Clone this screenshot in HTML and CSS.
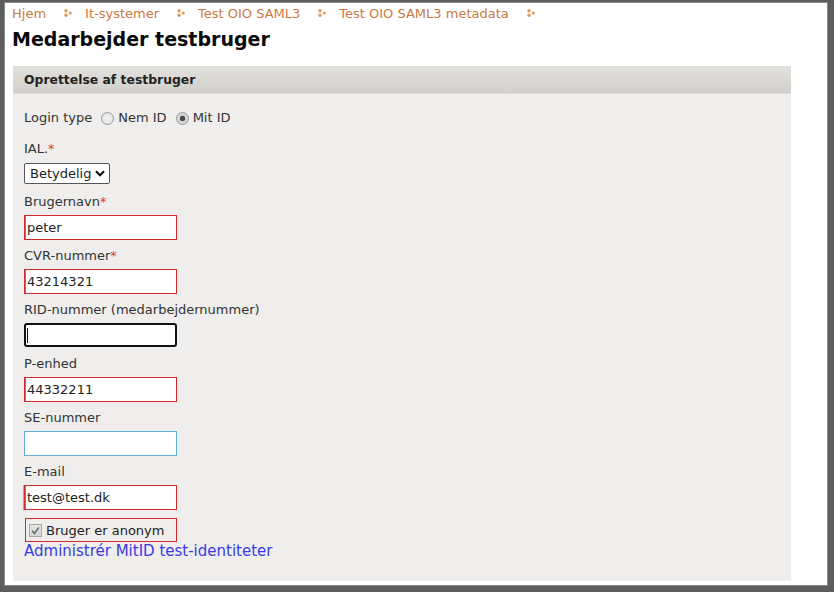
FILE: index.html
```html
<!DOCTYPE html>
<html lang="da">
<head>
<meta charset="utf-8">
<title>Medarbejder testbruger</title>
<link rel="stylesheet" href="styles.css">
</head>
<body>
<div class="page">
  <nav class="crumbs">
    <a href="#">Hjem</a><svg class="sep" viewBox="0 0 8 8" width="8" height="8"><circle cx="2" cy="1.8" r="1.7"/><circle cx="2" cy="6.2" r="1.7"/><circle cx="6.3" cy="4" r="1.5"/></svg><a href="#">It-systemer</a><svg class="sep" viewBox="0 0 8 8" width="8" height="8"><circle cx="2" cy="1.8" r="1.7"/><circle cx="2" cy="6.2" r="1.7"/><circle cx="6.3" cy="4" r="1.5"/></svg><a href="#">Test OIO SAML3</a><svg class="sep" viewBox="0 0 8 8" width="8" height="8"><circle cx="2" cy="1.8" r="1.7"/><circle cx="2" cy="6.2" r="1.7"/><circle cx="6.3" cy="4" r="1.5"/></svg><a href="#">Test OIO SAML3 metadata</a><svg class="sep" viewBox="0 0 8 8" width="8" height="8"><circle cx="2" cy="1.8" r="1.7"/><circle cx="2" cy="6.2" r="1.7"/><circle cx="6.3" cy="4" r="1.5"/></svg>
  </nav>
  <h1 class="title">Medarbejder testbruger</h1>
  <section class="panel">
    <header class="panel-head">Oprettelse af testbruger</header>
    <div class="panel-body">
      <div class="login-row">
        <span>Login type</span>
        <label class="radio"><input type="radio" name="lt"> Nem ID</label>
        <label class="radio"><input type="radio" name="lt" checked> Mit ID</label>
      </div>
      <div class="field field-select">
        <label class="lbl">IAL.<span class="req">*</span></label>
        <div class="select-wrap">
          <select class="sel"><option>Betydelig</option></select>
          <svg class="chev" viewBox="0 0 10 7" width="10" height="7"><path d="M1 1.2 L5 5.2 L9 1.2" fill="none" stroke="#111" stroke-width="2.2"/></svg>
        </div>
      </div>
      <div class="field">
        <label class="lbl">Brugernavn<span class="req">*</span></label>
        <input class="inp err" type="text" value="peter">
      </div>
      <div class="field">
        <label class="lbl">CVR-nummer<span class="req">*</span></label>
        <input class="inp err" type="text" value="43214321">
      </div>
      <div class="field">
        <label class="lbl">RID-nummer (medarbejdernummer)</label>
        <div class="caret-wrap"><input class="inp focus" type="text" value=""><span class="caret"></span></div>
      </div>
      <div class="field">
        <label class="lbl">P-enhed</label>
        <input class="inp err" type="text" value="44332211">
      </div>
      <div class="field">
        <label class="lbl">SE-nummer</label>
        <input class="inp plain" type="text" value="">
      </div>
      <div class="field">
        <label class="lbl">E-mail</label>
        <input class="inp err mail" type="text" value="test@test.dk">
      </div>
      <label class="check-box">
        <span class="cb-wrap"><input type="checkbox" class="cb" checked><svg class="tick" viewBox="0 0 13 13" width="13" height="13"><path d="M3.2 6.8 L5.4 9.4 L9.8 3.4" fill="none" stroke="#6a6a6a" stroke-width="1.6"/></svg></span>
        <span>Bruger er anonym</span>
      </label>
      <a class="link" href="#">Administrér MitID test-identiteter</a>
    </div>
  </section>
</div>
</body>
</html>
```

FILE: styles.css
```css
html, body {
  margin: 0;
  padding: 0;
}
body {
  background: #5d5d5d;
  width: 834px;
  height: 592px;
  overflow: hidden;
  font-family: "DejaVu Sans", Verdana, sans-serif;
  font-size: 13px;
  color: #333;
}
.page {
  margin: 2px 6px 0 4px;
  height: 584px;
  background: #fff;
  box-sizing: border-box;
  padding: 3px 0 0 8px;
  box-shadow: inset 0 0 0 1px #8a8a8a;
}
.crumbs {
  line-height: 18px;
  height: 18px;
  display: flex;
  align-items: center;
  font-size: 13px;
}
.crumbs a {
  color: #c97a42;
  text-decoration: none;
}
.sep {
  fill: #e09a55;
  margin: 0 13px 0 18px;
  position: relative;
  top: -1px;
}
.title {
  margin: 4px 0 0 0;
  font-size: 19px;
  line-height: 24px;
  font-weight: bold;
  color: #0a0a0a;
}
.panel {
  margin: 15px 0 0 1px;
  width: 778px;
  height: 515px;
  background: #efeeec;
}
.panel-head {
  height: 27px;
  line-height: 27px;
  padding-left: 11px;
  font-weight: bold;
  font-size: 12.4px;
  color: #222;
  background: linear-gradient(#e2e1de, #d1d0cc);
  border-bottom: 1px solid #dcdbd8;
}
.panel-body {
  padding: 16px 0 0 11px;
}
.login-row {
  display: flex;
  align-items: center;
  height: 16px;
  line-height: 16px;
  gap: 9px;
  color: #333;
}
.radio {
  display: flex;
  align-items: center;
  gap: 4px;
  color: #333;
}
.radio input {
  appearance: none;
  -webkit-appearance: none;
  margin: 0;
  width: 13px;
  height: 13px;
  border-radius: 50%;
  border: 1px solid #9a9a9a;
  background: radial-gradient(circle, #f4f4f4 0, #dcdcdc 100%);
  box-sizing: border-box;
}
.radio input:checked {
  background: radial-gradient(circle, #4a4a4a 0, #4a4a4a 2.4px, #cfcfcf 3px, #dedede 100%);
}
.login-row + .field {
  margin-top: 15px;
}
.lbl {
  display: block;
  height: 16px;
  line-height: 16px;
  color: #333;
}
.req {
  color: #e03c3c;
}
.select-wrap {
  position: relative;
  width: 86px;
  height: 21px;
  margin-top: 6px;
  margin-bottom: 10px;
}
.sel {
  appearance: none;
  -webkit-appearance: none;
  width: 86px;
  height: 21px;
  box-sizing: border-box;
  border: 1px solid #555;
  border-radius: 2px;
  background: #fff;
  font-family: "DejaVu Sans", Verdana, sans-serif;
  font-size: 13px;
  color: #222;
  padding: 0 0 0 5px;
  margin: 0;
}
.chev {
  position: absolute;
  right: 5px;
  top: 7px;
  pointer-events: none;
}
.inp {
  display: block;
  width: 153px;
  height: 25px;
  box-sizing: border-box;
  margin: 5px 0 8px 0;
  padding: 0 0 0 2px;
  font-family: "DejaVu Sans", Verdana, sans-serif;
  font-size: 13px;
  color: #222;
  background: #fff;
  border: 1px solid #999;
  outline: none;
}
.inp.err {
  border: 1px solid #d12c2c;
  box-shadow: inset 1px 0 0 #6f86a8;
}
.inp.mail {
  box-shadow: -1px 0 0 #7fb6d6, inset 1px 0 0 #6f86a8;
}
.inp.plain {
  border: 1px solid #5fb0d3;
}
.caret-wrap {
  position: relative;
  width: 153px;
}
.inp.focus {
  height: 24px;
  border: 2px solid #111;
  border-radius: 3px;
  margin-bottom: 9px;
}
.caret {
  position: absolute;
  left: 3px;
  top: 5px;
  width: 1px;
  height: 15px;
  background: #111;
}
.check-box {
  display: flex;
  align-items: center;
  gap: 4px;
  width: 152px;
  height: 24px;
  box-sizing: border-box;
  border: 1px solid #d12c2c;
  margin-left: 1px;
  padding-left: 3px;
  color: #222;
}
.cb-wrap {
  position: relative;
  width: 13px;
  height: 13px;
}
.cb {
  appearance: none;
  -webkit-appearance: none;
  margin: 0;
  width: 13px;
  height: 13px;
  box-sizing: border-box;
  border: 1px solid #a8a8a8;
  background: linear-gradient(#e6e6e6, #d4d4d4);
  display: block;
}
.tick {
  position: absolute;
  left: 0;
  top: 0;
}
.link {
  display: block;
  margin-top: 0;
  font-size: 15px;
  line-height: 19px;
  color: #3a3ae6;
  text-decoration: none;
}
```
